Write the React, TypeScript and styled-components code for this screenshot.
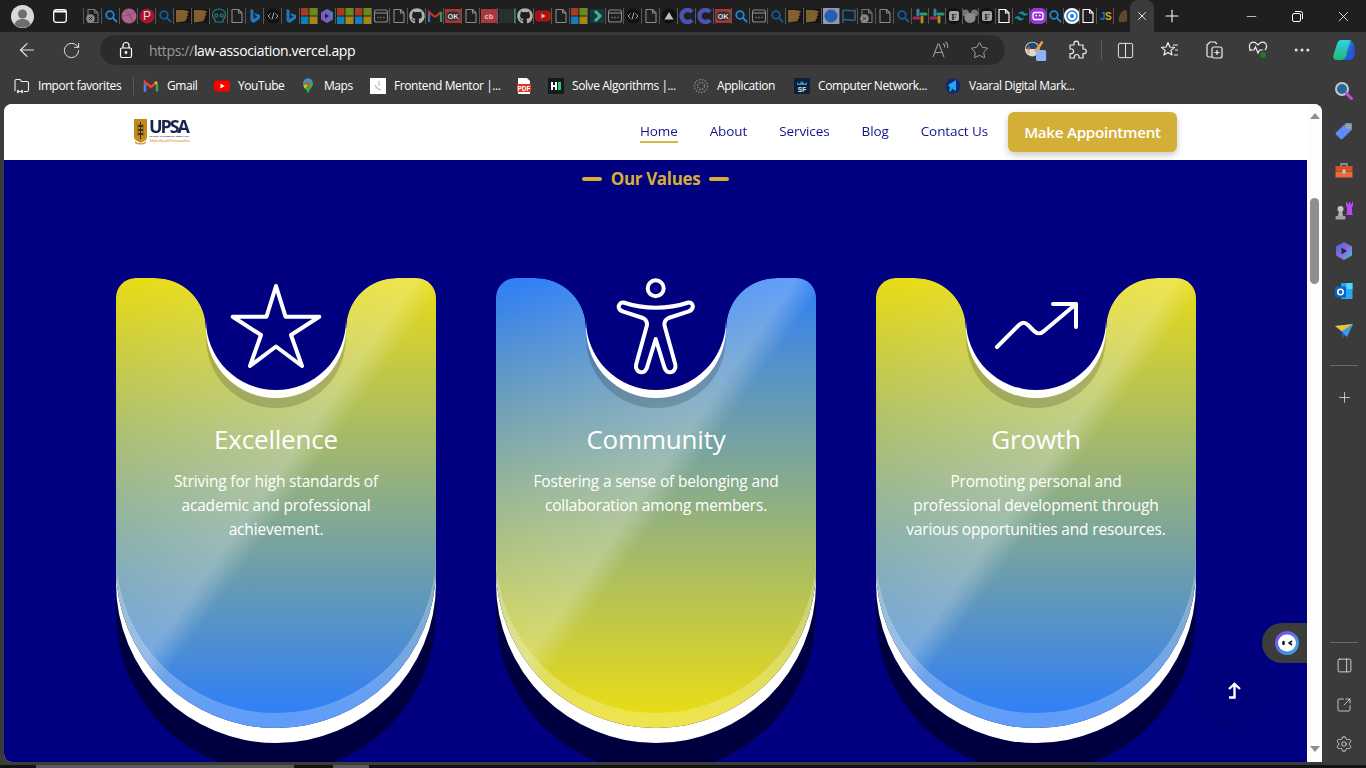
import React from "react";
import styled, { createGlobalStyle } from "styled-components";
import {
  ArrowLeft, RotateCw, Star, Columns2, Ellipsis, Plus, PanelRight,
  SquareArrowOutUpRight, Settings, X, Minus,
} from "lucide-react";
import { FaGithub } from "react-icons/fa";

const UI = '"Open Sans","Noto Sans",sans-serif';
const NAVY = "#000080";
const GOLD = "#D4AF37";
const YELLOW = "#E9DC16";
const BLUE = "#2F7FF7";

const Global = createGlobalStyle`
  html, body { margin: 0; height: 100%; overflow: hidden; background: #3b3b3b; }
  * { box-sizing: border-box; }
`;

const Screen = styled.div`
  width: 1366px; height: 768px; display: flex; flex-direction: column;
  background: #3b3b3b; font-family: ${UI}; overflow: hidden;
`;
const TabStrip = styled.div`
  height: 32px; flex: none; background: #1f1f1f; display: flex; align-items: center;
`;
const Profile = styled.div`
  width: 44px; height: 32px; display: flex; align-items: center; justify-content: center; flex: none;
`;
const TabAction = styled.div`
  width: 32px; margin-right: 7px; height: 32px; display: flex; align-items: center; justify-content: center; flex: none;
`;
const TabList = styled.div`display: flex; align-items: center; height: 32px; flex: none;`;
const Tab = styled.div<{ $narrow?: boolean }>`
  width: ${(p) => (p.$narrow ? "16.85px" : "18px")}; height: 16px; flex: none; overflow: hidden;
  border-left: 1px solid #565656; display: flex; align-items: center; justify-content: center;
`;
const ActiveTab = styled.div`
  width: 24px; height: 32px; flex: none; background: #3b3b3b; border-radius: 8px 8px 0 0;
  display: flex; align-items: center; justify-content: center; color: #fff;
`;
const NewTab = styled.div`
  width: 36px; height: 32px; flex: none; display: flex; align-items: center; justify-content: center; color: #fff;
`;
const WindowControls = styled.div`margin-left: auto; display: flex; flex: none;`;
const WinBtn = styled.div`
  width: 46px; height: 32px; display: flex; align-items: center; justify-content: center; color: #fff;
`;

const Toolbar = styled.div`
  height: 36px; flex: none; display: flex; align-items: center; padding-left: 5px; color: #f0f0f0;
`;
const ToolBtn = styled.div<{ $w?: number }>`
  width: ${(p) => p.$w ?? 44}px; height: 32px; flex: none; display: flex; align-items: center;
  justify-content: center; color: #e8e8e8;
`;
const AddressBar = styled.div`
  width: 905px; height: 30px; margin-left: 7px; margin-right: 7px; border-radius: 15px; background: #2b2b2b; flex: none;
  display: flex; align-items: center; padding-left: 18px;
`;
const Url = styled.div`
  margin-left: 15px; font-size: 14px; color: #fff; letter-spacing: -0.36px; white-space: nowrap; flex: 1;
  span { color: #9c9c9c; }
`;
const VSep = styled.div`width: 1px; height: 20px; background: #5c5c5c; flex: none; margin-left: 7px;`;

const Body = styled.div`flex: 1; display: flex; min-height: 0;`;
const Center = styled.div`flex: 1; display: flex; flex-direction: column; min-width: 0;`;
const FavBar = styled.div`
  height: 36px; flex: none; display: flex; align-items: center; padding-left: 14px; gap: 16px;
`;
const FavItem = styled.div`display: flex; align-items: center; gap: 8px; flex: none;`;
const FavText = styled.span<{ $w: number }>`
  font-size: 12px; color: #fff; white-space: nowrap; display: block; width: ${(p) => p.$w}px; letter-spacing: -0.42px; margin-top: -2px;
`;
const FavSep = styled.div`width: 1px; height: 18px; background: #5a5a5a; margin: 0 -7px 0 -5px;`;

const Viewport = styled.div`
  height: 658px; margin-left: 4px; display: flex; background: #fff; border-radius: 8px 8px 0 8px; overflow: hidden; flex: none;
`;
const Page = styled.div`width: 1303px; height: 658px; position: relative; overflow: hidden; flex: none;`;
const Scrollbar = styled.div`
  width: 15px; flex: none; background: #fdfdfd; display: flex; flex-direction: column; align-items: center; padding: 9px 0 10px;
`;
const ArrowUp = styled.div`
  width: 0; height: 0; border-left: 5px solid transparent; border-right: 5px solid transparent; border-bottom: 6px solid #8f8f8f;
`;
const ArrowDown = styled.div`
  width: 0; height: 0; margin-top: auto; border-left: 5px solid transparent; border-right: 5px solid transparent; border-top: 6px solid #8f8f8f;
`;
const Thumb = styled.div`width: 9px; height: 86px; margin-top: 79px; background: #8f8f8f; border-radius: 5px;`;

const Header = styled.header`
  height: 56px; background: #fff; display: flex; align-items: center; justify-content: space-between; padding: 0 130px;
`;
const LogoWrap = styled.div`display: flex; align-items: center; filter: blur(0.35px);`;
const Nav = styled.nav`display: flex; align-items: center; gap: 32px;`;
const NavLink = styled.a<{ $active?: boolean }>`
  font-size: 13.5px; line-height: 20px; color: ${NAVY}; opacity: 0.92; letter-spacing: -0.1px;
  border-bottom: 2px solid ${(p) => (p.$active ? GOLD : "transparent")};
`;
const CTA = styled.button`
  width: 169px; height: 40px; border: 0; border-radius: 6px; background: ${GOLD}; color: #fff; font-family: ${UI};
  font-size: 15.2px; font-weight: 600; letter-spacing: -0.28px; box-shadow: 0 3px 7px rgba(0, 0, 0, 0.22); margin-left: -12px;
`;

const Section = styled.section`
  background: ${NAVY}; height: 602px; display: flex; flex-direction: column; align-items: center; padding-top: 7px;
`;
const Heading = styled.h2`
  margin: 0; display: flex; align-items: center; gap: 9px; color: ${GOLD}; font-size: 17px; line-height: 24px; font-weight: 700; letter-spacing: -0.34px;
  &::before, &::after { content: ""; width: 20px; height: 4px; border-radius: 2px; background: ${GOLD}; }
`;
const Cards = styled.div`display: flex; gap: 60px; margin-top: 87px; margin-left: 1px;`;
const Card = styled.article<{ $top: string; $bottom: string }>`
  width: 320px; height: 450px; position: relative; flex: none; text-align: center; color: #fff; padding-top: 143px;
  border-radius: 20px 20px 160px 160px;
  background: linear-gradient(180deg, ${(p) => p.$top}, ${(p) => p.$bottom} 97%);
  box-shadow: inset 0 -15px 0 rgba(255, 255, 255, 0.24), 0 15px 0 #fff, 0 45px 0 rgba(0, 0, 0, 0.5);
  &::before {
    content: ""; position: absolute; inset: 0; border-radius: inherit;
    background: linear-gradient(to bottom right, rgba(255,255,255,0) 4%, rgba(255,255,255,0.25) 47%, rgba(255,255,255,0) 52%);
  }
`;
const Notch = styled.div`
  position: absolute; top: 0; left: 90px; width: 140px; height: 112px; background: ${NAVY};
  border-radius: 0 0 70px 70px; display: flex; justify-content: center; align-items: flex-start;
  box-shadow: 0 8px 0 #fff, 0 18px 0 rgba(0, 0, 0, 0.17); z-index: 1;
  &::before, &::after { content: ""; position: absolute; top: 0; width: 50px; height: 50px; }
  &::before { left: -50px; background: radial-gradient(circle 50px at 0 100%, transparent 98.5%, ${NAVY} 100%); }
  &::after { right: -50px; background: radial-gradient(circle 50px at 100% 100%, transparent 98.5%, ${NAVY} 100%); }
`;
const IconSvg = styled.svg`
  width: 100px; height: 100px; flex: none; fill: none; stroke: #fff; stroke-width: 4; stroke-linejoin: round; stroke-linecap: round;
`;
const CardTitle = styled.h3`
  position: relative; margin: 0; font-size: 26px; line-height: 36px; font-weight: 400; letter-spacing: -0.2px;
`;
const CardText = styled.p`
  position: relative; margin: 12px 0 0; font-size: 15.5px; line-height: 24px; letter-spacing: -0.17px;
`;
const Chat = styled.div`
  position: absolute; top: 519px; right: 0; width: 45px; height: 40px; background: #3c3c3c; border-radius: 20px 0 0 20px;
  display: flex; align-items: center; padding-left: 13px;
`;
const UpBtn = styled.div`
  position: absolute; left: 1194px; top: 550px; width: 72px; height: 72px; border-radius: 50%; background: #00007c;
  display: flex; align-items: center; justify-content: center; box-shadow: 0 1px 5px rgba(0, 0, 50, 0.3);
`;

const Sidebar = styled.aside`
  width: 44px; flex: none; display: flex; flex-direction: column; align-items: center; padding: 3px 0 2px; color: #e6e6e6;
`;
const SideBtn = styled.div<{ $short?: boolean }>`
  width: 44px; height: ${(p) => (p.$short ? 39 : 40)}px; flex: none; display: flex; align-items: center; justify-content: center;
`;
const SideRule = styled.div<{ $auto?: boolean }>`
  width: 28px; height: 1px; background: #6a6a6a; flex: none; margin-top: ${(p) => (p.$auto ? "auto" : "14px")}; margin-bottom: ${(p) => (p.$auto ? "3px" : "11px")};
`;
const Taskbar = styled.div`
  height: 3px; flex: none; background: #121212; display: flex; padding-left: 36px;
`;
const TaskSeg = styled.div<{ $w: number; $on?: boolean }>`
  width: ${(p) => p.$w}px; background: ${(p) => (p.$on ? "#5a5a5a" : "transparent")};
`;

const Fav: React.FC<{ k: string }> = ({ k }) => {
  const Svg = (c: React.ReactNode) => <svg width="16" height="16" viewBox="0 0 16 16" style={{ flex: "none" }}>{c}</svg>;
  const doc = (col: string) => (
    <path d="M3 1.5h6.5L13 5v9.5H3zM9.5 1.5V5H13" fill="none" stroke={col} strokeWidth="1.1" strokeLinejoin="round" />
  );
  const mag = (col: string) => (
    <g fill="none" stroke={col} strokeWidth="1.8" strokeLinecap="round"><circle cx="7" cy="7" r="3.8" /><path d="M10 10l3.5 3.5" /></g>
  );
  switch (k) {
    case "docx":
      return Svg(<>{doc("#777")}<circle cx="5.5" cy="10.5" r="4.3" fill="#8a8a8a" /><path d="M4 9l3 3M7 9l-3 3" stroke="#2a2a2a" strokeWidth="1" /></>);
    case "doc": return Svg(doc("#8a8a8a"));
    case "docw": return Svg(doc("#fff"));
    case "search": return Svg(mag("#1c88de"));
    case "searchdim": return Svg(mag("#145c9c"));
    case "dribbble":
      return Svg(<><circle cx="8" cy="8" r="7.5" fill="#b0628f" /><path d="M3 3c4 3 8 7 9 12M1 8c5 0 10-1 13-4M5 1c3 3 6 8 6 13" fill="none" stroke="#8e4a70" strokeWidth=".8" /></>);
    case "pinterest":
      return Svg(<><circle cx="8" cy="8" r="7.5" fill="#a4162c" /><text x="8" y="12" fontSize="12" fontFamily="Liberation Sans" textAnchor="middle" fill="#ddd">P</text></>);
    case "brown":
      return Svg(<><rect x="0" y="1" width="16" height="14" fill="#161310" /><path d="M1 2h7c3 .4 6 1 6 2l-2 1.5 1.5 1.5-2 1.5 1 1.5-2 1.5.5 1.5L5 14l-4 .5z" fill="#80602f" /></>);
    case "brownfade":
      return Svg(<path d="M5 14c-1-3 0-7 2-9 1-1 2-3 4-3l2 1v10l-3 1z" fill="#5c4a28" />);
    case "skull":
      return Svg(<g fill="none" stroke="#1f8090" strokeWidth="1.2"><path d="M8 1c-4 0-6.500 2.500-6.500 6 0 2.500 1 3.500 2.500 4.500V14h8v-2.500c1.500-1 2.500-2 2.500-4.500 0-3.500-2.500-6-6.500-6z" /><circle cx="5.300" cy="7.500" r="1.500" /><circle cx="10.700" cy="7.500" r="1.500" /></g>);
    case "bing":
      return Svg(<path d="M3.500 1l3 1v9l4-2.300-2-1L7.500 5l5.500 2v3.500L6.500 15l-3-2z" fill="#1f78bd" />);
    case "code":
      return Svg(<><circle cx="8" cy="8" r="7.500" fill="#111" /><path d="M5.500 5.500L3 8l2.500 2.500M10.500 5.500L13 8l-2.500 2.500M9 4.500L7 11.500" fill="none" stroke="#aaa" strokeWidth="1" /></>);
    case "ms":
      return Svg(<><rect x="0" y="0" width="7.500" height="7.500" fill="#a83c20" /><rect x="8.500" y="0" width="7.500" height="7.500" fill="#6a8c14" /><rect x="0" y="8.500" width="7.500" height="7.500" fill="#127db8" /><rect x="8.500" y="8.500" width="7.500" height="7.500" fill="#aa8610" /></>);
    case "video":
      return Svg(<><path d="M8 1l6 3.500v7L8 15l-6-3.500v-7z" fill="#7a5fc0" /><path d="M8 1l6 3.500v7l-3-1.500V6z" fill="#3f7fc4" /><path d="M6 5.500l4 2.500-4 2.500z" fill="#1f1f1f" /></>);
    case "window":
      return Svg(<g fill="none" stroke="#8a8a8a" strokeWidth="1.100"><rect x="1.500" y="2" width="13" height="12" rx="2" /><path d="M1.500 5h13" /><path d="M4.500 9.500h1.200M7.400 9.500h1.200M10.300 9.500h1.200" strokeWidth="1.500" /></g>);
    case "github": return <FaGithub size={16} color="#b0b0b0" style={{ flex: "none" }} />;
    case "gmail":
      return Svg(<g fill="none" strokeWidth="2.200"><path d="M2 14V4l6 5" stroke="#c8352a" /><path d="M8 9l6-5" stroke="#c8352a" /><path d="M14 4v10" stroke="#2f9e5a" /><path d="M2 6v8" stroke="#3a6fd0" /></g>);
    case "ok":
      return Svg(<><rect x="0" y="1" width="16" height="14" fill="#a83434" /><rect x="1" y="3.500" width="14" height="9" rx="4.500" fill="#333" /><text x="8" y="11" fontSize="7.500" fontWeight="700" fontFamily="Liberation Sans" textAnchor="middle" fill="#ddd">OK</text></>);
    case "cb":
      return Svg(<><rect x="0" y="1" width="16" height="14" fill="#a8383e" /><text x="8" y="10.500" fontSize="7.500" fontWeight="700" fontFamily="Liberation Sans" textAnchor="middle" fill="#e9c4c4">cb</text></>);
    case "dark":
      return Svg(<><rect x="0" y="1" width="15" height="14" fill="#252b2e" /><path d="M3 1v14M6 1v14M9 1v14M12 1v14" stroke="#30383c" /><rect x="15" y="1" width="1" height="14" fill="#2f8f4f" /></>);
    case "youtube":
      return Svg(<><rect x="0" y="2.500" width="16" height="11" rx="3.500" fill="#a81212" /><path d="M6.500 5.500l4 2.500-4 2.500z" fill="#d8c0c0" /></>);
    case "arrow":
      return Svg(<><rect x="1" y="1" width="14" height="14" rx="1" fill="#123a44" /><path d="M6 3l5 5-5 5" fill="none" stroke="#4fae8e" strokeWidth="3" /></>);
    case "triangle":
      return Svg(<><circle cx="8" cy="8" r="7.500" fill="#111" /><path d="M8 4l4.500 7.500h-9z" fill="#bdbdbd" /></>);
    case "cc":
      return Svg(<path d="M13 4A6 6 0 1 0 13 12" fill="none" stroke="#4f4fad" strokeWidth="4.500" />);
    case "bluecircle":
      return Svg(<><rect x="0" y="0" width="16" height="16" fill="#8e9bb0" /><circle cx="8" cy="8" r="6.500" fill="#2a5db5" /></>);
    case "flag":
      return Svg(<path d="M2 15V2.500c4-1.500 8 1.500 12 0V12c-4 1.500-8-1.500-12 0" fill="none" stroke="#2f6199" strokeWidth="1.500" />);
    case "slack":
      return Svg(<g fill="none" strokeWidth="3" strokeLinecap="round"><path d="M6 2v5" stroke="#2a8aa8" /><path d="M2 10h5" stroke="#a8264e" /><path d="M10 14V9" stroke="#b08c22" /><path d="M14 6H9" stroke="#2a9a6e" /></g>);
    case "f":
      return Svg(<><circle cx="8" cy="8" r="8" fill="#121212" /><rect x="3" y="3" width="10" height="10" rx="2" fill="#a3a3a3" /><text x="8" y="11.500" fontSize="9" fontWeight="700" fontFamily="Liberation Serif" textAnchor="middle" fill="#222">F</text></>);
    case "mouse":
      return Svg(<><circle cx="3.500" cy="5" r="3.500" fill="#76767c" /><circle cx="12.500" cy="5" r="3.500" fill="#76767c" /><ellipse cx="8" cy="10" rx="5.500" ry="5" fill="#8c8c90" /><circle cx="8" cy="13" r="1" fill="#b06a7c" /></>);
    case "tailwind":
      return Svg(<path d="M8 3.500c-2.100 0-3.500 1-4 3.200.8-1 1.700-1.400 2.700-1.100 1.200.3 1.700 2.100 3.700 2.100 2.100 0 3.500-1 4-3.200-.8 1-1.700 1.400-2.700 1.100C10.500 5.300 10 3.500 8 3.500zM4 8.300C1.900 8.300.500 9.300 0 11.500c.8-1 1.700-1.400 2.700-1.100 1.200.3 1.700 2.100 3.700 2.100 2.100 0 3.500-1 4-3.200-.8 1-1.700 1.400-2.700 1.100C6.500 10.100 6 8.300 4 8.300z" transform="translate(1 0)" fill="#1b8aa6" />);
    case "purple":
      return Svg(<><rect x="0" y="0" width="16" height="16" rx="5" fill="#9a36d8" /><rect x="3" y="4.500" width="10" height="7" rx="2" fill="none" stroke="#fff" strokeWidth="1.300" /><path d="M5.500 7.500h1.500M9 7.500h1.500" stroke="#fff" strokeWidth="1.300" /></>);
    case "target":
      return Svg(<><circle cx="8" cy="8" r="8" fill="#fff" /><circle cx="8" cy="8" r="5" fill="none" stroke="#1f7fd8" strokeWidth="1.500" /><circle cx="8" cy="8" r="2" fill="#1f7fd8" /></>);
    case "js":
      return Svg(<><text x="3" y="12" fontSize="10" fontWeight="700" fontFamily="Liberation Sans" fill="#1479c9">J</text><text x="8" y="12" fontSize="10" fontWeight="700" fontFamily="Liberation Sans" fill="#d9a520">S</text></>);
    default:
      return null;
  }
};

const tabs = "docx search dribbble pinterest searchdim brown brown skull doc bing code bing ms video ms ms window doc github gmail ok doc cb dark github youtube doc ms arrow window code doc triangle cc cc ok search window searchdim brown brown bluecircle flag docx doc searchdim slack slack f mouse f docw tailwind purple search target docw js brownfade".split(" ");

const favs: { k: string; t: string; w: number }[] = [
  { k: "gmail", t: "Gmail", w: 31 },
  { k: "youtube", t: "YouTube", w: 46 },
  { k: "maps", t: "Maps", w: 30 },
  { k: "fem", t: "Frontend Mentor |...", w: 106 },
  { k: "pdf", t: "", w: 0 },
  { k: "hn", t: "Solve Algorithms |...", w: 105 },
  { k: "app", t: "Application", w: 61 },
  { k: "sf", t: "Computer Network...", w: 111 },
  { k: "vaaral", t: "Vaaral Digital Mark...", w: 109 },
];

const FavIcon: React.FC<{ k: string }> = ({ k }) => {
  const S = (c: React.ReactNode) => <svg width="16" height="16" viewBox="0 0 16 16" style={{ flex: "none" }}>{c}</svg>;
  switch (k) {
    case "gmail":
      return S(<g fill="none" strokeWidth="2.400"><path d="M2 13.500V4l6 5 6-5" stroke="#ea4335" /><path d="M2 6v7.500" stroke="#4285f4" /><path d="M14 6v7.500" stroke="#34a853" /><path d="M14 4L12 5.500" stroke="#fbbc04" /></g>);
    case "youtube":
      return S(<><rect x="0" y="2.500" width="16" height="11" rx="3" fill="#f00" /><path d="M6.500 5.500l4.200 2.500-4.200 2.500z" fill="#fff" /></>);
    case "maps":
      return S(<><path d="M8 0.500c-3 0-5 2.200-5 5 0 3.500 3.500 5.500 5 10 1.500-4.500 5-6.500 5-10 0-2.800-2-5-5-5z" fill="#34a853" /><path d="M4 2.500l4 3.500 4-3c-1-1.600-2.400-2.500-4-2.500s-3 .8-4 2z" fill="#4285f4" /><path d="M3.300 7.500L8 6 5 11z" fill="#fbbc04" /><circle cx="8" cy="5.500" r="1.900" fill="#ea4335" /></>);
    case "fem":
      return S(<><rect width="16" height="16" fill="#fff" /><path d="M9 3v5M5 7c1 3 3 4 6 5" fill="none" stroke="#a8bcd0" strokeWidth="1.100" /></>);
    case "pdf":
      return S(<><path d="M2 0h9l3 3v13H2z" fill="#fff" /><rect x="1" y="6" width="14" height="8" fill="#e0352b" /><text x="8" y="12.500" fontSize="6.500" fontWeight="700" fontFamily="Liberation Sans" textAnchor="middle" fill="#fff">PDF</text></>);
    case "hn":
      return S(<><rect width="16" height="16" fill="#14191f" /><rect x="3" y="4" width="2" height="8" fill="#fff" /><rect x="7" y="4" width="2" height="8" fill="#fff" /><rect x="5" y="7" width="2" height="2" fill="#fff" /><rect x="10" y="4" width="3" height="8" fill="#2ec866" /></>);
    case "app":
      return S(<g fill="none" stroke="#8a8a8a" strokeWidth="1.300" strokeDasharray="1.500 1.300"><circle cx="8" cy="8" r="6.500" /><circle cx="8" cy="8" r="3.500" /></g>);
    case "sf":
      return S(<><rect width="16" height="16" fill="#0c2038" /><path d="M3 4l2 2 3-3 3 3 2-2v3H3z" fill="#3d88c8" /><text x="8" y="14" fontSize="6.500" fontWeight="700" fontFamily="Liberation Sans" textAnchor="middle" fill="#dfe8f0">SF</text></>);
    case "vaaral":
      return S(<><circle cx="8" cy="8" r="7.500" fill="#0c2a6c" /><path d="M3 7l8-5v11L7 10.500l-1 3-2-.5 1-3.500z" fill="#22a8f0" /></>);
    default:
      return null;
  }
};

const Logo = () => (
  <svg width="90" height="32" viewBox="0 0 90 32" style={{ marginLeft: -1 }}>
    <path d="M1 3h13v18c0 3-3 4-6.500 6C5 25 1 24 1 21z" fill="#c48a17" />
    <path d="M7.500 6v17M4.500 9l6 2M10.500 9l-6 2M4.500 13l6 2M10.500 13l-6 2M4.500 17l6 2M10.500 17l-6 2" stroke="#2a2a2a" strokeWidth="1" />
    <path d="M2 25c3 3 8 3 11 0v2c-3 2-8 2-11 0z" fill="#c9a34a" />
    <text x="16" y="17" fontSize="18" fontWeight="700" fontFamily="Open Sans" fill="#1a2450" textLength="41" lengthAdjust="spacing">UPSA</text>
    <text x="16.500" y="21" fontSize="2.200" fontWeight="700" fontFamily="Liberation Sans" fill="#2a2f55" textLength="40" lengthAdjust="spacingAndGlyphs">UNIVERSITY OF PROFESSIONAL STUDIES, ACCRA</text>
    <text x="16.500" y="26" fontSize="3" fontWeight="700" fontFamily="Liberation Sans" fill="#d8a840" textLength="40" lengthAdjust="spacingAndGlyphs">Scholarship with Professionalism</text>
  </svg>
);

const StarIcon = () => (
  <IconSvg viewBox="226 278 100 100">
    <path d="M276 286L285.500 316.700H319.300L291 335L302 366L276 346.500L250 366L261 335L232.700 316.700H266.500Z" />
  </IconSvg>
);
const PersonIcon = () => (
  <IconSvg viewBox="606 278 100 100">
    <circle cx="655.700" cy="288.300" r="8" />
    <path d="M623.500 302.500C634 306 645 307.700 655.700 307.700C667 307.700 678 306 688.500 302.500C691.500 302 693.500 305 692.500 308C691.800 310 690 311 688 311.700L668.500 318C665.500 319.500 664 322 664.500 325.500L675.300 364.500C676.300 368.500 673.500 372.300 670 372.300C667.500 372.300 665.700 370.800 664.700 368.300L655.700 339L646.700 368.300C645.700 370.800 643.900 372.300 641.400 372.300C637.900 372.300 635.100 368.500 636.100 364.500L646.900 325.500C647.400 322 645.900 319.500 642.900 318L623.400 311.700C621.400 311 619.600 310 618.900 308C617.900 305 620.500 302 623.500 302.500Z" />
  </IconSvg>
);
const GrowthIcon = () => (
  <IconSvg viewBox="986 278 100 100">
    <path d="M997 347L1019 325C1022 322 1025 322 1028 325L1034 331C1037 334 1041 334 1044 331L1076 304" />
    <path d="M1053 304H1076V327" />
  </IconSvg>
);

const values = [
  { t: "Excellence", icon: <StarIcon />, top: YELLOW, bottom: BLUE, lines: ["Striving for high standards of", "academic and professional", "achievement."] },
  { t: "Community", icon: <PersonIcon />, top: BLUE, bottom: YELLOW, lines: ["Fostering a sense of belonging and", "collaboration among members."] },
  { t: "Growth", icon: <GrowthIcon />, top: YELLOW, bottom: BLUE, lines: ["Promoting personal and", "professional development through", "various opportunities and resources."] },
];

export default function App() {
  const iconProps = { size: 19, strokeWidth: 1.25 };
  return (
    <Screen>
      <Global />
      <TabStrip>
        <Profile>
          <svg width="23" height="23" viewBox="0 0 23 23">
            <circle cx="11.500" cy="11.500" r="11.500" fill="#d9d9d9" />
            <circle cx="11.500" cy="9" r="4.500" fill="#6e6e6e" />
            <path d="M3.500 19.500c1-4 4.500-5.500 8-5.500s7 1.500 8 5.500a11.500 11.500 0 0 1-16 0z" fill="#6e6e6e" />
          </svg>
        </Profile>
        <TabAction>
          <svg width="14" height="14" viewBox="0 0 14 14" fill="none" stroke="#fff" strokeWidth="1.300">
            <rect x=".7" y=".7" width="12.600" height="12.600" rx="2.500" />
            <path d="M1 2.500h12" strokeWidth="2" />
          </svg>
        </TabAction>
        <TabList>
          {tabs.map((k, i) => (
            <Tab key={i} $narrow={i >= 46}><Fav k={k} /></Tab>
          ))}
          <ActiveTab><X size={14} strokeWidth={1.5} /></ActiveTab>
        </TabList>
        <NewTab><Plus size={20} strokeWidth={1.3} /></NewTab>
        <WindowControls>
          <WinBtn><Minus size={15} strokeWidth={1.1} /></WinBtn>
          <WinBtn>
            <svg width="11" height="11" viewBox="0 0 11 11" fill="none" stroke="#fff"><rect x=".5" y="2.500" width="8" height="8" rx="1.500" /><path d="M3 .5h5.500a2 2 0 0 1 2 2V8" /></svg>
          </WinBtn>
          <WinBtn><X size={17} strokeWidth={1.1} /></WinBtn>
        </WindowControls>
      </TabStrip>

      <Toolbar>
        <ToolBtn><ArrowLeft size={22} strokeWidth={1.2} /></ToolBtn>
        <ToolBtn><RotateCw size={19} strokeWidth={1.2} /></ToolBtn>
        <AddressBar>
          <svg width="16" height="18" viewBox="0 0 16 18" fill="none" stroke="#fff" strokeWidth="1.200">
            <rect x="2.500" y="7" width="11" height="9.500" rx="1.500" />
            <path d="M5 7V4.500a3 3 0 0 1 6 0V7" />
            <circle cx="8" cy="11.500" r=".8" fill="#fff" />
          </svg>
          <Url><span>https://</span>law-association.vercel.app</Url>
          <ToolBtn $w={24}>
            <svg width="18" height="18" viewBox="0 0 18 18" fill="none" stroke="#9a9a9a" strokeWidth="1.100"><path d="M1 16L6 3h1l5 13M3 11.500h7" /><path d="M11 2.500c1.500 1 2 2.500 1.500 4M13.500 1c2 1.500 2.500 4 2 6" /></svg>
          </ToolBtn>
          <ToolBtn $w={52}><Star size={19} strokeWidth={1.1} color="#b0b0b0" /></ToolBtn>
        </AddressBar>
        <ToolBtn $w={48}>
          <svg width="24" height="24" viewBox="0 0 26 26">
            <circle cx="9" cy="12" r="8" fill="#d8d8d8" />
            <path d="M2 12a7 7 0 0 1 14 0z" fill="#1f4a78" />
            <circle cx="5" cy="11" r="1.800" fill="#e04a3a" /><circle cx="5" cy="15" r="1.800" fill="#f0b83a" />
            <path d="M11 14L19 3l2 1.500L14 16z" fill="#f0a030" />
            <rect x="13" y="13" width="11" height="12" rx="2" fill="#8db4f5" />
          </svg>
        </ToolBtn>
        <ToolBtn $w={34}>
          <svg width="20" height="20" viewBox="0 0 20 20" fill="none" stroke="#eee" strokeWidth="1.200" strokeLinejoin="round">
            <path d="M7 3.500a2.300 2.300 0 0 1 4.600 0V5H16v4h1a2.300 2.300 0 0 1 0 4.600h-1V18h-4v-1.200a2.300 2.300 0 0 0-4.600 0V18H3v-4.400h1.300a2.300 2.300 0 0 0 0-4.600H3V5h4z" />
          </svg>
        </ToolBtn>
        <VSep />
        <ToolBtn $w={46}><Columns2 {...iconProps} /></ToolBtn>
        <ToolBtn>
          <svg width="20" height="20" viewBox="0 0 20 20" fill="none" stroke="#eee" strokeWidth="1.200" strokeLinejoin="round">
            <path d="M8 2.500l1.800 4.500 4.700.4-3.600 3 1.100 4.600L8 12.500l-4 2.500 1.100-4.600-3.600-3 4.700-.4z" /><path d="M13 5h5M15 10h3M14 15h4" />
          </svg>
        </ToolBtn>
        <ToolBtn>
          <svg width="20" height="20" viewBox="0 0 20 20" fill="none" stroke="#eee" strokeWidth="1.200">
            <path d="M8 17H5a2 2 0 0 1-2-2V5l3-3h5l2 2" /><rect x="8" y="7" width="10" height="11" rx="2" /><path d="M13 10v5M10.500 12.500h5" />
          </svg>
        </ToolBtn>
        <ToolBtn>
          <svg width="22" height="22" viewBox="0 0 22 22" fill="none" stroke="#eee" strokeWidth="1.200">
            <path d="M4 12C2 9 2 7 3 5c1.500-2.500 5-2.500 7 0l1 1 1-1c2-2.500 5.500-2.500 7 0 1 2 .8 4-1 6" />
            <path d="M2 11h5l1.500-3 2.500 6 1.500-3H16" />
            <circle cx="16" cy="16" r="3" fill="#1c7a2a" stroke="none" />
          </svg>
        </ToolBtn>
        <ToolBtn><Ellipsis size={20} strokeWidth={1.6} /></ToolBtn>
        <ToolBtn $w={40}>
          <svg width="24" height="24" viewBox="0 0 24 24">
            <defs>
              <linearGradient id="cpA" x1="0" y1="0" x2="0" y2="1"><stop offset="0" stopColor="#2fd3e8" /><stop offset="1" stopColor="#25b86b" /></linearGradient>
              <linearGradient id="cpB" x1="0" y1="0" x2="1" y2="1"><stop offset="0" stopColor="#2b8cf0" /><stop offset="1" stopColor="#2440c8" /></linearGradient>
            </defs>
            <path d="M9 2h9c2 0 1 2 .5 4L15 18c-.5 2-2 4-5 4H5C2 22 .5 20 1.500 17L5 6c.7-2 2-4 4-4z" fill="url(#cpA)" />
            <path d="M16 2c3 0 5 2 6 5l1 5c.7 4-1.500 5-4 5h-5l1-4 3-9c.3-1-.5-2-2-2z" fill="url(#cpB)" />
            <path d="M7 22h10c3 0 5-2 6-7-3 2-5 2-8 2l-2 3c-1 1.500-3 2-6 2z" fill="#1f5ae0" />
          </svg>
        </ToolBtn>
      </Toolbar>

      <Body>
        <Center>
          <FavBar>
            <FavItem>
              <svg width="16" height="16" viewBox="0 0 16 16" fill="none" stroke="#eee" strokeWidth="1.100">
                <path d="M1 13V3a1.500 1.500 0 0 1 1.500-1.500H6l1.500 2H13a1.500 1.500 0 0 1 1.500 1.500v7a1.500 1.500 0 0 1-1.500 1.500H10" />
                <path d="M3 13.500h6M3 13.500l1.500-1.500M3 13.500L4.500 15M9 13.500L7.500 12M9 13.500L7.500 15" />
              </svg>
              <FavText $w={84}>Import favorites</FavText>
            </FavItem>
            <FavSep />
            {favs.map((f) => (
              <FavItem key={f.k}>
                <FavIcon k={f.k} />
                {f.t && <FavText $w={f.w}>{f.t}</FavText>}
              </FavItem>
            ))}
          </FavBar>
          <Viewport>
            <Page>
              <Header>
                <LogoWrap><Logo /></LogoWrap>
                <Nav>
                  <NavLink $active>Home</NavLink>
                  <NavLink>About</NavLink>
                  <NavLink>Services</NavLink>
                  <NavLink>Blog</NavLink>
                  <NavLink>Contact Us</NavLink>
                  <CTA>Make Appointment</CTA>
                </Nav>
              </Header>
              <Section>
                <Heading>Our Values</Heading>
                <Cards>
                  {values.map((v) => (
                    <Card key={v.t} $top={v.top} $bottom={v.bottom}>
                      <Notch>{v.icon}</Notch>
                      <CardTitle>{v.t}</CardTitle>
                      <CardText>
                        {v.lines.map((l) => (
                          <React.Fragment key={l}>{l}<br /></React.Fragment>
                        ))}
                      </CardText>
                    </Card>
                  ))}
                </Cards>
              </Section>
              <Chat>
                <svg width="24" height="24" viewBox="0 0 24 24">
                  <defs><linearGradient id="chatG" x1="0" y1="0" x2="1" y2="1"><stop offset="0" stopColor="#8a3fe0" /><stop offset="1" stopColor="#28b4e8" /></linearGradient></defs>
                  <circle cx="12" cy="12" r="12" fill="url(#chatG)" />
                  <ellipse cx="12" cy="12" rx="9" ry="8.500" fill="#fff" />
                  <ellipse cx="8.500" cy="12" rx="1.400" ry="2.300" fill="#1a1a2a" />
                  <path d="M17 10l-2.700 2 2.700 2" fill="none" stroke="#1a1a2a" strokeWidth="1.800" />
                </svg>
              </Chat>
              <UpBtn>
                <svg width="15" height="17" viewBox="0 0 15 17" fill="none" stroke="#fff" strokeWidth="2.400">
                  <path d="M2 7L7.500 1.800L13 7M7.500 2.500V15.500H2" />
                </svg>
              </UpBtn>
            </Page>
            <Scrollbar>
              <ArrowUp />
              <Thumb />
              <ArrowDown />
            </Scrollbar>
          </Viewport>
        </Center>
        <Sidebar>
          <SideBtn>
            <svg width="20" height="20" viewBox="0 0 20 20">
              <circle cx="8" cy="8" r="6" fill="#1f6a9a" stroke="#c8c8c8" strokeWidth="2" />
              <path d="M12.500 12.500l5 5" stroke="#c64ad8" strokeWidth="3" strokeLinecap="round" />
            </svg>
          </SideBtn>
          <SideBtn>
            <svg width="20" height="20" viewBox="0 0 20 20">
              <path d="M12 2h6v6.500l-9.500 9.500a1.500 1.500 0 0 1-2 0L2 13.500a1.500 1.500 0 0 1 0-2z" fill="#5c8cf5" />
              <circle cx="14.500" cy="5.500" r="1.700" fill="none" stroke="#e8b020" strokeWidth="1.300" />
            </svg>
          </SideBtn>
          <SideBtn>
            <svg width="20" height="20" viewBox="0 0 20 20">
              <path d="M7 5V3h6v2" fill="none" stroke="#a8a8a8" strokeWidth="1.300" />
              <rect x="1.500" y="5" width="17" height="5" fill="#d8502a" />
              <rect x="1.500" y="10.500" width="17" height="6" fill="#ec6a3a" />
              <rect x="8.500" y="8.500" width="3" height="4" fill="#c9c9c9" />
            </svg>
          </SideBtn>
          <SideBtn>
            <svg width="20" height="20" viewBox="0 0 20 20">
              <path d="M12 1h1.500v2H15V1h1.500v2H18V1h1v4l-1 1v7h1v1h-7v-1h1V6l-1-1z" fill="#b848f8" />
              <circle cx="6.500" cy="8" r="3" fill="#c4c4c4" />
              <path d="M5 10h3l1 5H4z" fill="#b0b0b0" />
              <rect x="1.500" y="15" width="10" height="3.500" rx="1" fill="#a4a4a4" />
            </svg>
          </SideBtn>
          <SideBtn>
            <svg width="20" height="20" viewBox="0 0 20 20">
              <defs><linearGradient id="m3" x1="0" y1="0" x2="1" y2="1"><stop offset="0" stopColor="#3a6ae0" /><stop offset=".5" stopColor="#8a6ad8" /><stop offset="1" stopColor="#40c8e8" /></linearGradient></defs>
              <path d="M10 1l8 4.500v9L10 19l-8-4.500v-9z" fill="url(#m3)" />
              <path d="M7.500 6.500L13 10l-5.500 3.500z" fill="#26264a" />
            </svg>
          </SideBtn>
          <SideBtn>
            <svg width="20" height="20" viewBox="0 0 20 20">
              <rect x="7" y="2" width="11.500" height="16" rx="1" fill="#28a8ea" />
              <path d="M12.500 2h6v6h-6z" fill="#50d9ff" />
              <rect x="1" y="5.500" width="11" height="11" rx="1" fill="#0a64c8" />
              <circle cx="6.500" cy="11" r="2.700" fill="none" stroke="#fff" strokeWidth="1.500" />
            </svg>
          </SideBtn>
          <SideBtn>
            <svg width="20" height="20" viewBox="0 0 20 20">
              <path d="M1 5l18-2-6 13-5-5z" fill="#3a9af0" />
              <path d="M1 5l18-2L8 10z" fill="#f2c230" />
              <path d="M8 11l1 6 2-3z" fill="#1a6ac0" />
            </svg>
          </SideBtn>
          <SideRule />
          <SideBtn><Plus size={17} strokeWidth={1.1} /></SideBtn>
          <SideRule $auto />
          <SideBtn $short><PanelRight size={17} strokeWidth={1.2} /></SideBtn>
          <SideBtn $short><SquareArrowOutUpRight size={16} strokeWidth={1.2} /></SideBtn>
          <SideBtn $short><Settings size={18} strokeWidth={1.1} /></SideBtn>
        </Sidebar>
      </Body>
      <Taskbar>
        <TaskSeg $w={258} $on />
        <TaskSeg $w={39} />
        <TaskSeg $w={36} $on />
      </Taskbar>
    </Screen>
  );
}
